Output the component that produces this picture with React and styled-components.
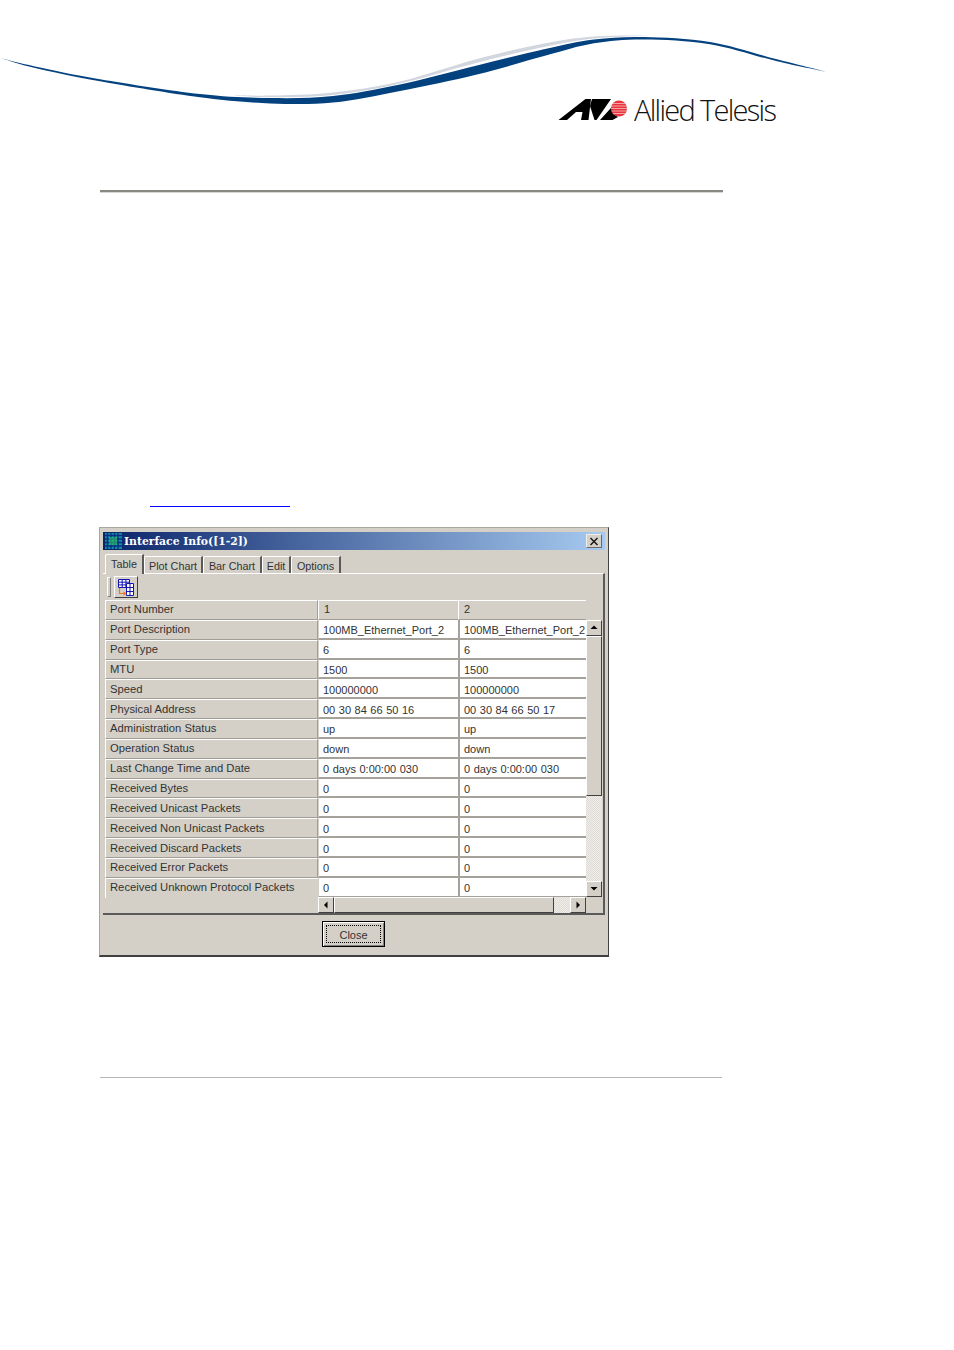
import styled, { createGlobalStyle } from 'styled-components';

const rows = [
    ['Port Description', '100MB_Ethernet_Port_2', '100MB_Ethernet_Port_2'],
    ['Port Type', '6', '6'],
    ['MTU', '1500', '1500'],
    ['Speed', '100000000', '100000000'],
    ['Physical Address', '00 30 84 66 50 16', '00 30 84 66 50 17'],
    ['Administration Status', 'up', 'up'],
    ['Operation Status', 'down', 'down'],
    ['Last Change Time and Date', '0 days 0:00:00 030', '0 days 0:00:00 030'],
    ['Received Bytes', '0', '0'],
    ['Received Unicast Packets', '0', '0'],
    ['Received Non Unicast Packets', '0', '0'],
    ['Received Discard Packets', '0', '0'],
    ['Received Error Packets', '0', '0'],
    ['Received Unknown Protocol Packets', '0', '0'],
];

const tabs = [
    ['Table', 39],
    ['Plot Chart', 59],
    ['Bar Chart', 59],
    ['Edit', 29],
    ['Options', 50],
];

// catmull-rom through the points, good enough for the swoosh edges
function smooth(points) {
    let d = `M${points[0][0]} ${points[0][1]}`;
    for (let i = 0; i < points.length - 1; i++) {
        const p0 = points[i - 1] || points[i];
        const p1 = points[i];
        const p2 = points[i + 1];
        const p3 = points[i + 2] || p2;
        const c1x = p1[0] + (p2[0] - p0[0]) / 6;
        const c1y = p1[1] + (p2[1] - p0[1]) / 6;
        const c2x = p2[0] - (p3[0] - p1[0]) / 6;
        const c2y = p2[1] - (p3[1] - p1[1]) / 6;
        d += `C${c1x} ${c1y} ${c2x} ${c2y} ${p2[0]} ${p2[1]}`;
    }
    return d;
}

function blob(top, bottom) {
    return smooth(top) + smooth(bottom).replace(/^M/, 'L') + 'Z';
}

const blueTop = [[2, 58.5], [35, 66.4], [100, 79.2], [200, 94], [270, 98], [333, 96], [400, 84.5], [477, 65.5], [544, 49.3], [594, 39.5], [644, 37], [710, 42], [777, 59.3], [827, 72]];
const blueBottom = [[827, 72], [777, 61.3], [710, 44.2], [644, 39.4], [594, 43.3], [544, 56], [477, 74.5], [400, 91], [333, 102.6], [270, 103.4], [200, 97.3], [100, 81.3], [35, 68], [2, 58.5]];
const greyTop = [[235, 95], [270, 95.6], [333, 92.5], [400, 81.5], [477, 59], [544, 43.5], [594, 36.5], [650, 35.5]];
const greyBottom = [[650, 35.5], [594, 38.5], [544, 47], [477, 62.7], [400, 83.5], [333, 95], [270, 97.3], [235, 95.6]];

function Swoosh() {
    return (
        <SwooshSvg width="954" height="130" viewBox="0 0 954 130">
            <path d={blob(greyTop, greyBottom)} fill="#d2d6df" />
            <path d={blob(blueTop, blueBottom)} fill="#04427f" />
        </SwooshSvg>
    );
}

function LogoMark() {
    return (
        <svg width="72" height="24" viewBox="0 0 72 24">
            <defs>
                <clipPath id="disc">
                    <circle cx="61" cy="10.5" r="8" />
                </clipPath>
            </defs>
            <path d="M0.5 22L27.5 1H33L30.5 22H23L24.5 14H18L9 22Z" fill="#000" />
            <path d="M34 1H53L38.5 22H36.5L32 8Z" fill="#000" />
            <path d="M42 22L58 4.5C54 10 54.5 16 60 19L54.5 22Z" fill="#000" />
            <g clipPath="url(#disc)">
                <rect x="52" y="2" width="18" height="17" fill="#e8343c" />
                <path d="M52 5.5H70M52 8H70M52 10.5H70M52 13H70M52 15.5H70" stroke="#f6c3c3" strokeWidth="0.8" />
            </g>
        </svg>
    );
}

function TitleIcon() {
    return (
        <svg width="17" height="16" viewBox="0 0 17 16">
            <rect width="17" height="16" fill="#128d9c" />
            <path d="M0 2.5H17M0 6H17M0 9.5H17M0 13H17M2.5 0V16M6 0V16M9.5 0V16M13 0V16" stroke="#0b2f86" strokeWidth="1.3" />
            <rect x="4" y="4" width="8" height="8" fill="#26c85e" opacity="0.6" />
        </svg>
    );
}

function TableIcon() {
    return (
        <svg width="18" height="18" viewBox="0 0 18 18">
            <path d="M1.5 1.5H12.5V9.5H1.5ZM1.5 4.2H12.5M1.5 6.9H12.5M5.2 1.5V9.5M8.9 1.5V9.5" fill="#fff" stroke="#1414b4" />
            <path d="M9.5 5.5H16.5V17.5H9.5ZM9.5 9.5H16.5M9.5 13.5H16.5M13 5.5V17.5" fill="#fff" stroke="#1414b4" />
            <path d="M2.5 10V15.5H8M6.5 14L8.5 15.5L6.5 17" fill="none" stroke="#f07a1c" strokeWidth="1.2" />
        </svg>
    );
}

function Arrow({ dir }) {
    const d = {
        up: 'M0.5 5L4 1.5L7.5 5Z',
        down: 'M0.5 2L4 5.5L7.5 2Z',
        left: 'M5.5 0.5L2 4L5.5 7.5Z',
        right: 'M2.5 0.5L6 4L2.5 7.5Z',
    }[dir];
    return (
        <svg width="8" height="8" viewBox="0 0 8 8">
            <path d={d} fill="#000" />
        </svg>
    );
}

function App() {
    return (
        <Page>
            <GlobalStyle />
            <Header>
                <Swoosh />
                <Logo>
                    <LogoMark />
                    <LogoText>Allied Telesis</LogoText>
                </Logo>
            </Header>
            <TopRule />
            <LinkLine />

            <Window>
                <TitleBar>
                    <TitleIcon />
                    <TitleText>Interface Info([1-2])</TitleText>
                    <CloseBox>
                        <svg width="10" height="9" viewBox="0 0 10 9">
                            <path d="M1.5 1L8.5 8M8.5 1L1.5 8" stroke="#1a1a1a" strokeWidth="1.5" />
                        </svg>
                    </CloseBox>
                </TitleBar>

                <TabRow>
                    {tabs.map(([t, w], i) => (
                        <Tab key={t} $active={i === 0} $width={w}>
                            {t}
                        </Tab>
                    ))}
                </TabRow>

                <TabPanel>
                    <Toolbar>
                        <Grip />
                        <ToolButton>
                            <TableIcon />
                        </ToolButton>
                    </Toolbar>

                    <TableArea>
                        <Labels>
                            <Label>Port Number</Label>
                            {rows.map(r => (
                                <Label key={r[0]}>{r[0]}</Label>
                            ))}
                        </Labels>

                        <DataPane>
                            <HeadRow>
                                <HeadCell $width={140}>1</HeadCell>
                                <HeadCell $width={128}>2</HeadCell>
                            </HeadRow>
                            <Body>
                                <Cells>
                                    {rows.map(r => (
                                        <Row key={r[0]}>
                                            <Cell $width={140}>{r[1]}</Cell>
                                            <Cell $width={128}>{r[2]}</Cell>
                                        </Row>
                                    ))}
                                </Cells>
                                <VScroll>
                                    <ScrollButton $size={16}>
                                        <Arrow dir="up" />
                                    </ScrollButton>
                                    <VThumb />
                                    <Track />
                                    <ScrollButton $size={16}>
                                        <Arrow dir="down" />
                                    </ScrollButton>
                                </VScroll>
                            </Body>
                            <HScroll>
                                <ScrollButton $size={16}>
                                    <Arrow dir="left" />
                                </ScrollButton>
                                <HThumb />
                                <Track />
                                <ScrollButton $size={16}>
                                    <Arrow dir="right" />
                                </ScrollButton>
                            </HScroll>
                        </DataPane>
                    </TableArea>
                </TabPanel>

                <Footer>
                    <CloseButton>
                        <CloseLabel>Close</CloseLabel>
                    </CloseButton>
                </Footer>
            </Window>

            <BottomRule />
        </Page>
    );
}

export default App;

const GlobalStyle = createGlobalStyle`
    html, body {
        margin: 0;
        padding: 0;
        background: #ffffff;
    }
`;

const Page = styled.div`
    width: 954px;
    height: 1350px;
    display: flex;
    flex-direction: column;
    font-family: 'Liberation Sans', Arial, sans-serif;
    overflow: hidden;
`;

const Header = styled.div`
    height: 190px;
    position: relative;
`;

const SwooshSvg = styled.svg`
    display: block;
`;

const Logo = styled.div`
    position: absolute;
    left: 558px;
    top: 97px;
    display: flex;
    align-items: center;
    gap: 4px;
`;

const LogoText = styled.span`
    font-family: 'Open Sans', 'Liberation Sans', sans-serif;
    font-weight: 300;
    font-size: 29px;
    line-height: 26px;
    letter-spacing: -1.7px;
    color: #111111;
`;

const TopRule = styled.div`
    width: 623px;
    height: 2px;
    margin-left: 100px;
    background: #8a8883;
    border-bottom: 1px solid #d8d6d0;
`;

const LinkLine = styled.div`
    width: 140px;
    height: 1px;
    margin: 313px 0 0 150px;
    background: #0000ff;
`;

const Window = styled.div`
    width: 510px;
    height: 430px;
    box-sizing: border-box;
    margin: 20px 0 0 99px;
    padding: 4px 3px 0 3px;
    display: flex;
    flex-direction: column;
    background: #d4d0c8;
    border: 1px solid #a9a69f;
    border-right-color: #404040;
    border-bottom: 2px solid #404040;
    color: #333333;
    font-size: 11px;
`;

const TitleBar = styled.div`
    height: 18px;
    flex: none;
    display: flex;
    align-items: center;
    gap: 2px;
    padding: 0 3px 0 2px;
    background: linear-gradient(90deg, #0a246a 0%, #a6caf0 100%);
`;

const TitleText = styled.span`
    flex: 1;
    color: #ffffff;
    font-family: 'DejaVu Serif', serif;
    font-weight: 700;
    font-size: 10.8px;
`;

const CloseBox = styled.div`
    width: 16px;
    height: 14px;
    box-sizing: border-box;
    display: flex;
    align-items: center;
    justify-content: center;
    background: #d4d0c8;
    border: 1px solid;
    border-color: #f0eee9 #6a6a6a #6a6a6a #f0eee9;
`;

const TabRow = styled.div`
    height: 20px;
    flex: none;
    margin-top: 3px;
    padding-left: 2px;
    display: flex;
    align-items: flex-end;
    position: relative;
    z-index: 1;
`;

const Tab = styled.div`
    width: ${p => p.$width}px;
    height: ${p => (p.$active ? 20 : 17)}px;
    box-sizing: border-box;
    margin-bottom: ${p => (p.$active ? -1 : 0)}px;
    padding: ${p => (p.$active ? '0 0 2px' : '1px 0 0')};
    display: flex;
    align-items: center;
    justify-content: center;
    white-space: nowrap;
    background: #d4d0c8;
    border-left: 1px solid #ffffff;
    border-top: 1px solid #ffffff;
    border-right: 2px solid #5a5a5a;
    border-top-left-radius: 2px;
    font-size: 10.8px;
`;

const TabPanel = styled.div`
    width: 502px;
    height: 342px;
    flex: none;
    box-sizing: border-box;
    padding-left: 2px;
    display: flex;
    flex-direction: column;
    border-top: 1px solid #ffffff;
    border-right: 2px solid #5a5a5a;
    border-bottom: 2px solid #5a5a5a;
`;

const Toolbar = styled.div`
    height: 26px;
    flex: none;
    display: flex;
    align-items: center;
    gap: 3px;
    padding-left: 2px;
`;

const Grip = styled.div`
    width: 2px;
    height: 18px;
    border: 1px solid;
    border-color: #ffffff #808080 #808080 #ffffff;
`;

const ToolButton = styled.div`
    width: 24px;
    height: 22px;
    box-sizing: border-box;
    display: flex;
    align-items: center;
    justify-content: center;
    border: 1px solid;
    border-color: #ffffff #404040 #404040 #ffffff;
`;

const TableArea = styled.div`
    display: flex;
`;

const Labels = styled.div`
    width: 213px;
    flex: none;
    font-size: 11.25px;
`;

const Label = styled.div`
    height: 19.85px;
    box-sizing: border-box;
    padding: 0 0 1px 4px;
    display: flex;
    align-items: center;
    white-space: nowrap;
    border-left: 1px solid #ffffff;
    border-top: 1px solid #ffffff;
    border-bottom: 1px solid #a09d96;
    border-right: 1px solid #a09d96;
    &:last-child {
        padding-bottom: 3px;
        border-bottom: none;
        border-right: none;
    }
`;

const DataPane = styled.div`
    width: 284px;
    flex: none;
    display: flex;
    flex-direction: column;
`;

const HeadRow = styled.div`
    height: 19.85px;
    display: flex;
`;

const HeadCell = styled.div`
    width: ${p => p.$width}px;
    box-sizing: border-box;
    padding: 0 0 2px 5px;
    display: flex;
    align-items: center;
    border-left: 1px solid #ffffff;
    border-top: 1px solid #ffffff;
    border-bottom: 1px solid #a09d96;
`;

const Body = styled.div`
    height: 277px;
    display: flex;
`;

const Cells = styled.div`
    width: 268px;
    flex: none;
    overflow: hidden;
`;

const Row = styled.div`
    height: 19.85px;
    display: flex;
`;

const Cell = styled.div`
    width: ${p => p.$width}px;
    box-sizing: border-box;
    padding: 3px 0 0 4px;
    display: flex;
    align-items: center;
    overflow: hidden;
    white-space: nowrap;
    word-spacing: 0.5px;
    background: #ffffff;
    border-left: 2px solid #a5a29c;
    border-bottom: 2px solid #a5a29c;
    &:first-child {
        border-left: 1px solid #d4d0c8;
    }
`;

const VScroll = styled.div`
    width: 16px;
    flex: none;
    display: flex;
    flex-direction: column;
`;

const HScroll = styled.div`
    width: 268px;
    height: 16px;
    display: flex;
`;

const ScrollButton = styled.div`
    width: ${p => p.$size}px;
    height: ${p => p.$size}px;
    flex: none;
    box-sizing: border-box;
    display: flex;
    align-items: center;
    justify-content: center;
    background: #d4d0c8;
    border: 1px solid;
    border-color: #ffffff #404040 #404040 #ffffff;
`;

const Track = styled.div`
    flex: 1;
    background: repeating-conic-gradient(#f0eeea 0 25%, #dedbd4 0 50%) 0 0 / 2px 2px;
`;

const VThumb = styled.div`
    height: 160px;
    flex: none;
    box-sizing: border-box;
    background: #d4d0c8;
    border: 1px solid;
    border-color: #ffffff #404040 #404040 #ffffff;
`;

const HThumb = styled.div`
    width: 220px;
    flex: none;
    box-sizing: border-box;
    background: #d4d0c8;
    border: 1px solid;
    border-color: #ffffff #404040 #404040 #ffffff;
`;

const Footer = styled.div`
    flex: 1;
    padding: 6px 0 0 219px;
`;

const CloseButton = styled.div`
    width: 63px;
    height: 26px;
    box-sizing: border-box;
    padding: 3px;
    background: #d4d0c8;
    border: 1px solid #000000;
    box-shadow: inset 1px 1px 0 #ffffff, inset -1px -1px 0 #808080;
`;

const CloseLabel = styled.div`
    height: 100%;
    padding-top: 1px;
    display: flex;
    align-items: center;
    justify-content: center;
    border: 1px dotted #000000;
    box-sizing: border-box;
    font-size: 11px;
`;

const BottomRule = styled.div`
    width: 622px;
    height: 1px;
    margin: 120px 0 0 100px;
    background: #b8b6b2;
`;
